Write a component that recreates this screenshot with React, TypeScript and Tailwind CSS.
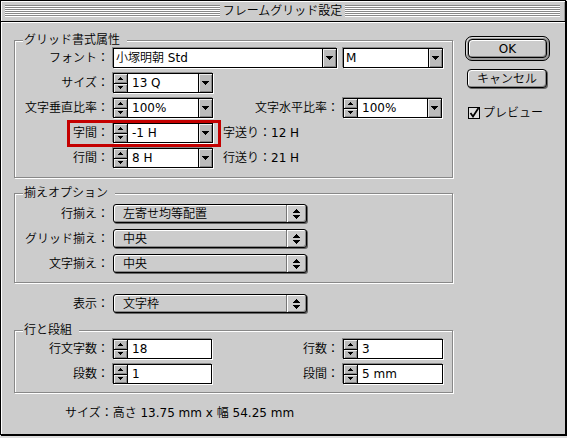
import React from 'react';

// CJK runs in Noto (thin), latin runs in DejaVu regular (closer to the old bitmap font)
const CJK = /([\u3000-\u30ff\u4e00-\u9fff\uff00-\uffef]+)/;
function T({ s }: { s: string }) {
  return (
    <span className="whitespace-pre">
      {s.split(CJK).map((p, i) =>
        p === '' ? null : CJK.test(p) ? (
          <span key={i} className="font-[350]">{p}</span>
        ) : (
          <span key={i}>{p}</span>
        )
      )}
    </span>
  );
}

const UpS = () => (
  <svg width="5" height="3" shapeRendering="crispEdges"><path d="M2 0h1v1h1v1h1v1H0V2h1V1h1z" fill="#000" /></svg>
);
const DownS = () => (
  <svg width="5" height="3" shapeRendering="crispEdges"><path d="M0 0h5v1H4v1H3v1H2V2H1V1H0z" fill="#000" /></svg>
);
const Down = () => (
  <svg width="7" height="4" shapeRendering="crispEdges"><path d="M0 0h7v1H6v1H5v1H4v1H3V3H2V2H1V1H0z" fill="#000" /></svg>
);
const UpDown = () => (
  <svg width="7" height="10" shapeRendering="crispEdges">
    <path d="M3 0h1v1h1v1h1v1h1v1H0V3h1V2h1V1h1z" fill="#000" />
    <path d="M0 6h7v1H6v1H5v1H4v1H3V9H2V8H1V7H0z" fill="#000" />
  </svg>
);

function Stepper() {
  return (
    <div className="w-[15px] h-full border border-black flex flex-col bg-[#bbbbbb] shrink-0">
      <div className="flex-1 flex items-center justify-center border-b border-black shadow-[inset_1px_1px_0_#eeeeee,inset_-1px_-1px_0_#888888]">
        <UpS />
      </div>
      <div className="flex-1 flex items-center justify-center shadow-[inset_1px_1px_0_#eeeeee,inset_-1px_-1px_0_#888888]">
        <DownS />
      </div>
    </div>
  );
}

function DropBtn() {
  return (
    <div className="w-[14px] h-full border-y border-r border-black bg-[#bbbbbb] flex items-center justify-center shrink-0 shadow-[inset_1px_1px_0_#eeeeee,inset_-1px_-1px_0_#888888]">
      <Down />
    </div>
  );
}

// stepper + text field (+ optional menu button)
function Spin({ value, w, menu = true }: { value: string; w: string; menu?: boolean }) {
  return (
    <div className="flex h-[20px] shrink-0 shadow-[-1px_-1px_0_#888888,1px_1px_0_#ffffff]">
      <Stepper />
      <div className={`${w} h-full bg-white border-y border-r border-black flex items-center pl-[4px]`}><T s={value} /></div>
      {menu && <DropBtn />}
    </div>
  );
}

function Combo({ value, w }: { value: string; w: string }) {
  return (
    <div className="flex h-[20px] shrink-0 shadow-[-1px_-1px_0_#888888,1px_1px_0_#ffffff]">
      <div className={`${w} h-full bg-white border border-black flex items-center pl-[2px]`}><T s={value} /></div>
      <DropBtn />
    </div>
  );
}

function Popup({ value }: { value: string }) {
  return (
    <div className="w-[194px] h-[19px] rounded-[3px] border border-black bg-[#cccccc] flex shrink-0 shadow-[inset_1px_1px_0_#ffffff,inset_-1px_-1px_0_#888888,1px_1px_0_#666666]">
      <div className="flex-1 flex items-center pl-[9px]"><T s={value} /></div>
      <div className="w-[20px] border-l border-[#777777] shadow-[inset_1px_0_0_#ffffff] flex items-center justify-center">
        <UpDown />
      </div>
    </div>
  );
}

function Lbl({ s, w }: { s: string; w: string }) {
  return <div className={`${w} text-right shrink-0`}><T s={s} /></div>;
}

function Group({ title, className, children }: { title: string; className: string; children: React.ReactNode }) {
  return (
    <div className={`relative w-[439px] border border-[#888888] shadow-[inset_1px_1px_0_#ffffff,1px_1px_0_#ffffff] ${className}`}>
      <span className="absolute left-[8px] -top-[8px] pl-[1px] pr-[7px] bg-[#cccccc] leading-[14px]"><T s={title} /></span>
      {children}
    </div>
  );
}

export default function App() {
  return (
    <div className="w-[567px] h-[438px] bg-[#dddddd] font-['DejaVu_Sans','Noto_Sans_CJK_JP',sans-serif] text-[12px] leading-[14px] text-black">
      <div className="w-[566px] h-[435px] border border-black bg-[#cccccc] flex flex-col shadow-[1px_1px_0_#000000]">
        {/* title bar */}
        <div className="h-[21px] border-b border-black flex items-center pl-[4px] pr-[5px] shadow-[inset_1px_1px_0_#ffffff,inset_-1px_0_0_#999999]">
          <div className="flex-1 h-[12px] bg-[image:repeating-linear-gradient(to_bottom,#888888_0px,#888888_1px,#ffffff_1px,#ffffff_2px)]" />
          <div className="px-[3px]"><T s="フレームグリッド設定" /></div>
          <div className="flex-1 h-[12px] bg-[image:repeating-linear-gradient(to_bottom,#888888_0px,#888888_1px,#ffffff_1px,#ffffff_2px)]" />
        </div>

        {/* content */}
        <div className="flex-1 flex shadow-[inset_1px_1px_0_#ffffff]">
          <div className="w-[454px] pl-[13px] pt-[18px] flex flex-col">
            <Group title="グリッド書式属性" className="pt-[7px] pb-[9px] flex flex-col gap-[5px]">
              <div className="flex items-center h-[20px]">
                <Lbl w="w-[94px]" s="フォント：" />
                <div className="ml-[4px]"><Combo value="小塚明朝 Std" w="w-[210px]" /></div>
                <div className="ml-[6px]"><Combo value="M" w="w-[86px]" /></div>
              </div>
              <div className="flex items-center h-[20px]">
                <Lbl w="w-[94px]" s="サイズ：" />
                <div className="ml-[4px]"><Spin value="13 Q" w="w-[71px]" /></div>
              </div>
              <div className="flex items-center h-[20px]">
                <Lbl w="w-[94px]" s="文字垂直比率：" />
                <div className="ml-[4px]"><Spin value="100%" w="w-[71px]" /></div>
                <Lbl w="w-[126px]" s="文字水平比率：" />
                <div className="ml-[4px]"><Spin value="100%" w="w-[70px]" /></div>
              </div>
              <div className="relative flex items-center h-[20px]">
                <Lbl w="w-[94px]" s="字間：" />
                <div className="ml-[4px]"><Spin value="-1 H" w="w-[71px]" /></div>
                <div className="ml-[10px]"><T s="字送り：12 H" /></div>
                <div className="absolute left-[52px] -top-[3px] w-[154px] h-[27px] border-[3px] border-[#c40000]" />
              </div>
              <div className="flex items-center h-[20px]">
                <Lbl w="w-[94px]" s="行間：" />
                <div className="ml-[4px]"><Spin value="8 H" w="w-[71px]" /></div>
                <div className="ml-[10px]"><T s="行送り：21 H" /></div>
              </div>
            </Group>

            <Group title="揃えオプション" className="mt-[15px] pt-[10px] pb-[9px] flex flex-col gap-[6px]">
              <div className="flex items-center h-[19px]">
                <Lbl w="w-[94px]" s="行揃え：" />
                <div className="ml-[4px]"><Popup value="左寄せ均等配置" /></div>
              </div>
              <div className="flex items-center h-[19px]">
                <Lbl w="w-[94px]" s="グリッド揃え：" />
                <div className="ml-[4px]"><Popup value="中央" /></div>
              </div>
              <div className="flex items-center h-[19px]">
                <Lbl w="w-[94px]" s="文字揃え：" />
                <div className="ml-[4px]"><Popup value="中央" /></div>
              </div>
            </Group>

            <div className="mt-[11px] flex items-center h-[19px]">
              <Lbl w="w-[95px]" s="表示：" />
              <div className="ml-[4px]"><Popup value="文字枠" /></div>
            </div>

            <Group title="行と段組" className="mt-[17px] pt-[8px] pb-[8px] flex flex-col gap-[5px]">
              <div className="flex items-center h-[20px]">
                <Lbl w="w-[94px]" s="行文字数：" />
                <div className="ml-[4px]"><Spin value="18" w="w-[84px]" menu={false} /></div>
                <Lbl w="w-[127px]" s="行数：" />
                <div className="ml-[4px]"><Spin value="3" w="w-[85px]" menu={false} /></div>
              </div>
              <div className="flex items-center h-[20px]">
                <Lbl w="w-[94px]" s="段数：" />
                <div className="ml-[4px]"><Spin value="1" w="w-[84px]" menu={false} /></div>
                <Lbl w="w-[127px]" s="段間：" />
                <div className="ml-[4px]"><Spin value="5 mm" w="w-[85px]" menu={false} /></div>
              </div>
            </Group>

            <div className="mt-[14px] pl-[51px] leading-[12px]"><T s="サイズ：高さ 13.75 mm x 幅 54.25 mm" /></div>
          </div>

          {/* buttons */}
          <div className="pl-[10px] pt-[14px] flex flex-col">
            <div className="w-[85px] h-[25px] rounded-[7px] border border-black bg-[#999999] p-[2px] shadow-[inset_1px_1px_0_#dddddd]">
              <div className="w-full h-full rounded-[4px] border border-black bg-[#cccccc] flex items-center justify-center shadow-[inset_1px_1px_0_#ffffff,inset_-1px_-1px_0_#888888]">
                OK
              </div>
            </div>
            <div className="mt-[8px] ml-[2px] w-[80px] h-[19px] rounded-[4px] border border-black bg-[#cccccc] flex items-center justify-center shadow-[inset_1px_1px_0_#ffffff,inset_-1px_-1px_0_#888888,1px_1px_0_#666666]">
              <T s="キャンセル" />
            </div>
            <div className="mt-[18px] ml-[3px] flex items-center gap-[3px]">
              <svg width="12" height="12" shapeRendering="crispEdges">
                <rect x="0.5" y="0.5" width="11" height="11" fill="#dddddd" stroke="#000000" />
                <path d="M2.5 6 L5 9.5 L10.5 1" stroke="#000000" strokeWidth="1.8" fill="none" shapeRendering="auto" />
              </svg>
              <T s="プレビュー" />
            </div>
          </div>
        </div>
      </div>
    </div>
  );
}
